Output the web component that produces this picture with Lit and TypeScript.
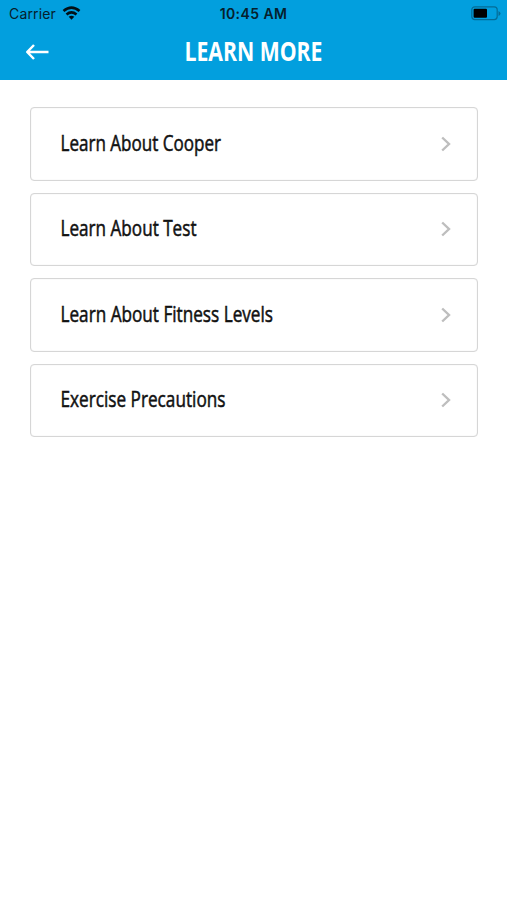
import { LitElement, html, css } from "lit";
import { customElement } from "lit/decorators.js";

interface Row { label: string; width: number; }

const rows: Row[] = [
  { label: "Learn About Cooper", width: 160.5 },
  { label: "Learn About Test", width: 136 },
  { label: "Learn About Fitness Levels", width: 212.5 },
  { label: "Exercise Precautions", width: 165 },
];

@customElement("app-root")
export class AppRoot extends LitElement {
  static styles = css`
    :host { display: block; height: 900px; background: #fff; font-family: "Open Sans", sans-serif; overflow: hidden; }
    .header { height: 80px; background: #029fde; }
    .status { height: 27px; display: grid; grid-template-columns: 1fr 1fr 1fr; align-items: center; color: #06202c; font: 14px Inter, sans-serif; }
    .carrier { display: flex; align-items: center; gap: 6px; padding-left: 9px; letter-spacing: 0.15px; }
    .wifi { margin-top: -1px; }
    .time { text-align: center; font-weight: 600; letter-spacing: 0.42px; }
    .battery { display: flex; justify-content: flex-end; padding-right: 6px; }
    .nav { height: 53px; display: grid; grid-template-columns: 1fr auto 1fr; align-items: start; }
    .back { margin: 16px 0 0 25px; }
    svg { display: block; overflow: visible; }
    text { white-space: pre; }
    .title { fill: #fff; font-weight: 700; font-size: 27.5px; }
    .list { padding: 27px 29px 0 30px; display: flex; flex-direction: column; gap: 12px; }
    .card { box-sizing: border-box; height: 73.5px; border: 1px solid #d6d6d6; border-radius: 4px; box-shadow: inset 0 0 1px #d0d0d0; display: flex; justify-content: space-between; align-items: center; padding: 0 25px 0 29px; }
    .label { fill: #111; stroke: #111; stroke-width: 0.55px; font-weight: 500; font-size: 22.5px; }
  `;

  render() {
    return html`
      <div class="header">
        <div class="status">
          <div class="carrier"><span>Carrier</span>
            <svg class="wifi" width="19" height="14" viewBox="0 0 18 14" fill="none" stroke="#021016" stroke-width="2.6">
              <path d="M1 5 Q9 -1.8 17 5M4 8.4 Q9 4.2 14 8.4"/><path d="M6.2 10.8 Q9 8.6 11.8 10.8 L9 13.8Z" fill="#021016" stroke="none"/>
            </svg>
          </div>
          <div class="time">10:45 AM</div>
          <div class="battery">
            <svg width="30" height="15" viewBox="0 0 30 15"><rect x="0.8" y="0.8" width="25.4" height="12.8" rx="3" fill="none" stroke="#046c96" stroke-width="1.2"/><rect x="2.6" y="2.8" width="13.4" height="9" rx="1" fill="#000"/><path d="M27.5 5v5q2-1 2-2.5t-2-2.5" fill="#046c96"/></svg>
          </div>
        </div>
        <div class="nav">
          <svg class="back" width="25" height="18" viewBox="0 0 25 18" fill="none" stroke="#fff" stroke-width="2.5" stroke-linejoin="round"><path d="M2 9H23.5M9 2L2.2 9L9 16"/></svg>
          <svg width="139" height="53"><text class="title" x="0.5" y="34" textLength="138" lengthAdjust="spacingAndGlyphs">LEARN MORE</text></svg>
          <span></span>
        </div>
      </div>
      <div class="list">
        ${rows.map((r) => html`<div class="card">
          <svg width="240" height="40"><text class="label" x="0.5" y="27.3" textLength=${r.width} lengthAdjust="spacingAndGlyphs">${r.label}</text></svg>
          <svg width="12" height="18" viewBox="0 0 12 18" fill="none" stroke="#bebebe" stroke-width="2.4"><path d="M2.2 2.5L9 9L2.2 15.5"/></svg>
        </div>`)}
      </div>`;
  }
}
